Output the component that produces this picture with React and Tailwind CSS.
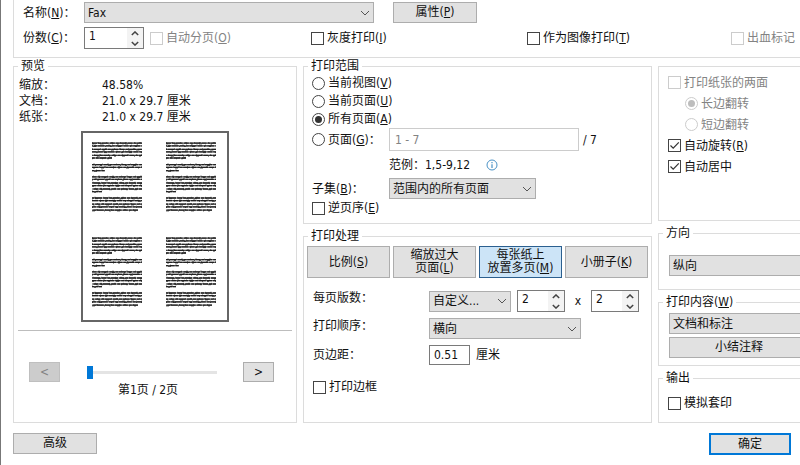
import React from "react";

const K = ({ children }) => (
  <span>
    (<u className="underline-offset-1">{children}</u>)
  </span>
);

function Group({ title, className = "", body = "", children }) {
  return (
    <fieldset className={`min-w-0 border border-[#dcdcdc] ${className}`}>
      {title && <legend className="ml-1 px-[3px] leading-4">{title}</legend>}
      <div className={body}>{children}</div>
    </fieldset>
  );
}

function Chevron({ up = false, className = "" }) {
  return (
    <svg viewBox="0 0 10 6" className={className} fill="none" stroke="currentColor" aria-hidden="true">
      <path d={up ? "M1 5 L5 1 L9 5" : "M1 1 L5 5 L9 1"} />
    </svg>
  );
}

function Check({ children, checked, disabled, className = "" }) {
  return (
    <label className={`flex items-center gap-[3px] whitespace-nowrap ${disabled ? "text-[#838383]" : ""} ${className}`}>
      <span className="grid size-[13px] shrink-0">
        <input
          type="checkbox"
          defaultChecked={checked}
          disabled={disabled}
          className="peer col-start-1 row-start-1 size-[13px] appearance-none border border-[#444] bg-white disabled:border-[#cccccc]"
        />
        <svg
          viewBox="0 0 13 13"
          className="pointer-events-none col-start-1 row-start-1 hidden size-[13px] text-[#333] peer-checked:block"
          fill="none"
          stroke="currentColor"
          strokeWidth="1.2"
          aria-hidden="true"
        >
          <path d="M2.5 6.5 L5.2 9.2 L10.8 3.4" />
        </svg>
      </span>
      <span>{children}</span>
    </label>
  );
}

function Radio({ children, name, checked, disabled, className = "" }) {
  return (
    <label className={`flex items-center gap-[3px] whitespace-nowrap ${disabled ? "text-[#838383]" : ""} ${className}`}>
      <input
        type="radio"
        name={name}
        defaultChecked={checked}
        disabled={disabled}
        className="grid size-[13px] shrink-0 appearance-none place-items-center rounded-full border border-[#444] bg-white before:size-[7px] before:rounded-full before:content-[''] checked:before:bg-[#333] disabled:border-[#cccccc] disabled:checked:before:bg-[#bdbdbd]"
      />
      <span>{children}</span>
    </label>
  );
}

function Select({ id, label, value, className = "" }) {
  return (
    <span className={`grid items-center ${className}`}>
      <select
        id={id}
        aria-label={label}
        className="col-start-1 row-start-1 h-[21px] w-full appearance-none border border-[#adadad] bg-[#e1e1e1] pl-[3px] pr-5 leading-4"
      >
        <option>{value}</option>
      </select>
      <Chevron className="pointer-events-none col-start-1 row-start-1 mr-1 h-[6px] w-[10px] justify-self-end text-[#555]" />
    </span>
  );
}

function Spin({ id, label, value, className = "" }) {
  return (
    <span className={`flex h-[22px] border border-[#7a7a7a] bg-white ${className}`}>
      <input
        id={id}
        aria-label={label}
        defaultValue={value}
        className="min-w-0 flex-1 bg-transparent pb-1 pl-1 outline-none"
      />
      <span className="flex w-4 shrink-0 flex-col bg-[#f3f3f3] text-[#444]">
        <button type="button" aria-label="增加" className="flex flex-1 items-center justify-center">
          <Chevron up className="h-[5px] w-2 stroke-[1.8]" />
        </button>
        <button type="button" aria-label="减少" className="flex flex-1 items-center justify-center">
          <Chevron className="h-[5px] w-2 stroke-[1.8]" />
        </button>
      </span>
    </span>
  );
}

function Button({ children, className = "", ...rest }) {
  return (
    <button
      type="button"
      className={`flex items-center justify-center border leading-[13px] ${className}`}
      {...rest}
    >
      {children}
    </button>
  );
}

// Baseline and width of every line of one miniature page.
const LINES = [
  [1.2, 50], [3.8, 50], [7.3, 50], [9.9, 50], [13.4, 50], [16, 20],
  [22.7, 50], [25.3, 50], [28.7, 13],
  [34.8, 50], [37.4, 50], [41, 50], [43.6, 50], [47, 50], [49.6, 10],
  [56, 50], [58.6, 50], [62.2, 50], [64.8, 50], [68.2, 46],
];

function MiniPage() {
  return (
    <svg viewBox="0 0 50 71" className="h-[71px] w-[50px]" aria-hidden="true">
      {LINES.map(([y, w], i) => (
        <g key={y} stroke="#222">
          <path d={`M0 ${y} H${w}`} strokeWidth="1.2" stroke="#666" />
          <path d={`M0 ${y} H${w}`} strokeWidth="1.3" strokeDasharray="5 1 3 .6 7 1.2" strokeDashoffset={i * 4} />
          <path d={`M0 ${y + 0.7} H${w}`} strokeWidth=".8" strokeDasharray="2 6 3 9 1 4" strokeDashoffset={i * 7} />
          <path d={`M0 ${y - 0.7} H${w}`} strokeWidth=".5" strokeDasharray="1 4 2 7" strokeDashoffset={i * 3} />
        </g>
      ))}
    </svg>
  );
}

function Preview() {
  return (
    <Group title="预览">
      <dl className="grid grid-cols-[83px_1fr] pl-[5px] pt-[3px] leading-4">
        <dt>缩放：</dt>
        <dd>48.58%</dd>
        <dt>文档：</dt>
        <dd>21.0 x 29.7 厘米</dd>
        <dt>纸张：</dt>
        <dd>21.0 x 29.7 厘米</dd>
      </dl>
      <div className="mt-[6px] ml-[67px] grid w-[148px] grid-cols-[50px_50px] justify-between gap-y-6 border-2 border-[#666] bg-white pt-[9px] pr-[11px] pb-3 pl-[9px]">
        <MiniPage />
        <MiniPage />
        <MiniPage />
        <MiniPage />
      </div>
      <hr className="mx-1 mt-2 border-t border-[#bdbdbd]" />
      <div className="mt-[31px] flex items-center justify-between pr-[22px] pl-[15px]">
        <Button disabled aria-label="上一页" className="h-5 w-[31px] border-[#bfbfbf] bg-[#cccccc] text-[#838383]">
          &lt;
        </Button>
        <input
          type="range"
          aria-label="页"
          min="1"
          max="2"
          defaultValue="1"
          className="h-[13px] w-[130px] appearance-none bg-transparent [&::-webkit-slider-runnable-track]:h-[3px] [&::-webkit-slider-runnable-track]:bg-[#e4e4e4] [&::-webkit-slider-thumb]:-mt-[5px] [&::-webkit-slider-thumb]:h-[13px] [&::-webkit-slider-thumb]:w-[6px] [&::-webkit-slider-thumb]:appearance-none [&::-webkit-slider-thumb]:bg-[#0078d7]"
        />
        <Button aria-label="下一页" className="h-5 w-[31px] border-[#adadad] bg-[#e1e1e1]">
          &gt;
        </Button>
      </div>
      <p className="pr-[14px] pb-6 text-center leading-4">第1页 / 2页</p>
    </Group>
  );
}

function PrintRange() {
  return (
    <Group title="打印范围" body="px-2 pb-[6px]">
      <Radio name="range" className="h-[18px]">当前视图<K>V</K></Radio>
      <Radio name="range" className="h-[18px]">当前页面<K>U</K></Radio>
      <Radio name="range" checked className="h-[18px]">所有页面<K>A</K></Radio>
      <div className="grid grid-cols-[77px_1fr] items-center">
        <Radio name="range">页面<K>G</K>：</Radio>
        <div className="flex items-center gap-1">
          <input
            aria-label="页面范围"
            defaultValue="1 - 7"
            className="h-[23px] w-[190px] border border-[#cccccc] pl-[5px] text-[#838383] outline-none"
          />
          <span>/ 7</span>
        </div>
        <p className="col-start-2 flex h-[27px] items-center gap-4">
          范例：1,5-9,12
          <svg viewBox="0 0 12 12" className="size-3" fill="none" stroke="#4a92c6" aria-hidden="true">
            <circle cx="6" cy="6" r="5" />
            <path d="M6 5.2 V9 M6 3 V4.2" strokeWidth="1.2" />
          </svg>
        </p>
        <label htmlFor="subset">子集<K>B</K>：</label>
        <Select id="subset" value="范围内的所有页面" className="w-[147px]" />
      </div>
      <Check className="h-[18px]">逆页序<K>E</K></Check>
    </Group>
  );
}

const HANDLING = "h-8 border-[#adadad] bg-[#e1e1e1]";

function PrintHandling() {
  return (
    <Group title="打印处理" className="flex-1">
      <div className="grid grid-cols-4 gap-[3px] px-[3px] pt-[2px]">
        <Button className={HANDLING}>比例<K>S</K></Button>
        <Button className={HANDLING}>
          <span>缩放过大<br />页面<K>L</K></span>
        </Button>
        <Button className="h-8 border-[#2b5f8f] bg-[#cce4f7]">
          <span>每张纸上<br />放置多页<K>M</K></span>
        </Button>
        <Button className={HANDLING}>小册子<K>K</K></Button>
      </div>
      <div className="mt-3 grid grid-cols-[116px_1fr] items-start gap-y-[6px] pl-[9px] leading-4">
        <label htmlFor="per-sheet">每页版数：</label>
        <div className="flex">
          <Select id="per-sheet" value="自定义..." className="w-[82px]" />
          <Spin label="列数" value="2" className="ml-[6px] w-12" />
          <span className="w-[26px] self-center text-center">x</span>
          <Spin label="行数" value="2" className="w-12" />
        </div>
        <label htmlFor="order">打印顺序：</label>
        <Select id="order" value="横向" className="w-[152px]" />
        <label htmlFor="margin" className="self-center">页边距：</label>
        <div className="flex items-center gap-[6px]">
          <input id="margin" defaultValue="0.51" className="h-5 w-[41px] border border-[#7a7a7a] pl-1 outline-none" />
          <span>厘米</span>
        </div>
        <Check className="mt-2">打印边框</Check>
      </div>
    </Group>
  );
}

function SideOptions() {
  return (
    <div className="-mr-5 flex min-w-0 flex-col gap-1">
      <Group className="mt-2" body="pt-[5px] pb-[43px] pl-[9px]">
        <Check disabled className="h-[21px]">打印纸张的两面</Check>
        <Radio name="flip" checked disabled className="ml-[17px] h-[21px]">长边翻转</Radio>
        <Radio name="flip" disabled className="ml-[17px] h-[21px]">短边翻转</Radio>
        <Check checked className="h-[21px]">自动旋转<K>R</K></Check>
        <Check checked className="h-[21px]">自动居中</Check>
      </Group>
      <Group title="方向" body="pt-[14px] pb-[13px] pl-[10px]">
        <Select label="方向" value="纵向" />
      </Group>
      <Group title={<>打印内容<K>W</K></>} body="pt-[3px] pb-[7px] pl-[10px]">
        <Select label="打印内容" value="文档和标注" />
        <div className="pt-[3px] pr-[10px]">
          <Button className="h-[21px] w-full border-[#adadad] bg-[#e1e1e1]">小结注释</Button>
        </div>
      </Group>
      <Group title="输出" className="flex-1" body="pt-2 pl-[9px]">
        <Check className="h-[18px]">模拟套印</Check>
      </Group>
    </div>
  );
}

export default function App() {
  return (
    <main className="min-h-screen overflow-hidden border-l border-[#777] bg-white pl-3 font-['DejaVu_Sans_Condensed','Noto_Sans_CJK_SC',sans-serif] text-[12px] leading-4 text-[#111]">
      <section className="border-b border-l border-[#dcdcdc] pb-2" aria-label="打印机">
        <div className="flex items-center pt-[2px] pl-[9px]">
          <label htmlFor="printer" className="w-[61px] whitespace-nowrap">名称<K>N</K>：</label>
          <Select id="printer" value="Fax" className="w-[290px]" />
          <Button className="ml-[19px] h-[21px] w-[84px] border-[#adadad] bg-[#e1e1e1]">属性<K>P</K></Button>
        </div>
        <div className="mt-1 grid grid-cols-[61px_227fr_216fr_204fr_69fr] items-center pl-[9px]">
          <label htmlFor="copies" className="whitespace-nowrap">份数<K>C</K>：</label>
          <div className="flex items-center gap-[6px]">
            <Spin id="copies" label="份数" value="1" className="w-[60px]" />
            <Check disabled>自动分页<K>O</K></Check>
          </div>
          <Check>灰度打印<K>I</K></Check>
          <Check>作为图像打印<K>T</K></Check>
          <Check disabled>出血标记</Check>
        </div>
      </section>
      <div className="grid grid-cols-[284fr_349fr_142fr] gap-[6px]">
        <Preview />
        <div className="flex min-w-0 flex-col gap-1">
          <PrintRange />
          <PrintHandling />
        </div>
        <SideOptions />
      </div>
      <footer className="flex justify-between py-[10px] pr-[9px]">
        <Button className="h-[21px] w-[84px] border-[#adadad] bg-[#e1e1e1]">高级</Button>
        <Button className="h-[22px] w-[82px] border-2 border-[#0078d7] bg-[#e1e1e1]">确定</Button>
      </footer>
    </main>
  );
}
